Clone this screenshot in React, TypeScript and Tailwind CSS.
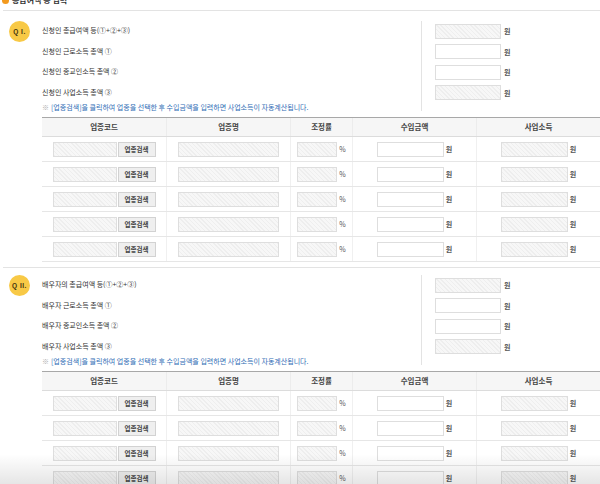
import React from 'react';

const hatch =
  'bg-[repeating-linear-gradient(45deg,#eeeeee_0px,#eeeeee_1px,#f7f7f7_1px,#f7f7f7_3px)]';

interface SectionProps {
  badge: string;
  labels: string[];
  topPad: string;
}

const Won = () => <span className="text-[7px] font-bold text-[#555]">원</span>;

const ReadOnlyBox = ({ width }: { width: string }) => (
  <input
    type="text"
    readOnly
    className={`${width} h-[15px] border border-[#dedede] ${hatch} outline-none`}
  />
);

const EditBox = ({ width }: { width: string }) => (
  <input
    type="text"
    className={`${width} h-[15px] border border-[#dedede] bg-white outline-none`}
  />
);

const headers = [
  { name: '업종코드', w: 'w-[124px]' },
  { name: '업종명', w: 'w-[124px]' },
  { name: '조정률', w: 'w-[62px]' },
  { name: '수입금액', w: 'w-[124px]' },
  { name: '사업소득', w: 'w-[124px]' },
];

const BizTable = () => (
  <div className="w-[558px] mt-[5px] border-t border-[#a8a8a8]">
    <div className="flex h-[19px] bg-[#f6f6f6] border-b border-[#dcdcdc]">
      {headers.map((h, i) => (
        <div
          key={h.name}
          className={`${h.w} flex items-center justify-center text-[7.5px] font-bold text-[#444] ${
            i > 0 ? 'border-l border-[#ececec]' : ''
          }`}
        >
          {h.name}
        </div>
      ))}
    </div>
    {[0, 1, 2, 3, 4].map((r) => (
      <div key={r} className="flex h-[25px] border-b border-[#e6e6e6]">
        <div className="w-[124px] flex items-center justify-center gap-[1px]">
          <ReadOnlyBox width="w-[64px]" />
          <button className="w-[38px] h-[15px] bg-[#efefef] border border-[#d2d2d2] text-[6.5px] font-bold text-[#444] leading-none">
            업종검색
          </button>
        </div>
        <div className="w-[124px] flex items-center justify-center border-l border-[#f0f0f0]">
          <ReadOnlyBox width="w-[101px]" />
        </div>
        <div className="w-[62px] flex items-center justify-center gap-[2px] border-l border-[#f0f0f0]">
          <ReadOnlyBox width="w-[40px]" />
          <span className="text-[7px] text-[#555]">%</span>
        </div>
        <div className="w-[124px] flex items-center justify-center gap-[2px] border-l border-[#f0f0f0]">
          <EditBox width="w-[67px]" />
          <Won />
        </div>
        <div className="w-[124px] flex items-center justify-center gap-[2px] border-l border-[#f0f0f0]">
          <ReadOnlyBox width="w-[67px]" />
          <Won />
        </div>
      </div>
    ))}
  </div>
);

const Section: React.FC<SectionProps> = ({ badge, labels, topPad }) => (
  <div className={`flex ${topPad}`}>
    <div className="ml-[9px] mt-[1px] w-[21px] h-[21px] rounded-full bg-[#f8c946] flex items-center justify-center font-['Liberation_Sans',sans-serif] text-[6.5px] font-bold text-[#3d3010] tracking-[0.5px] shrink-0 whitespace-pre">
      {badge}
    </div>
    <div className="ml-[12px] flex-1">
      <div className="flex">
        <div className="w-[379px]">
          {labels.map((l) => (
            <div key={l} className="h-[20.5px] flex items-center text-[7px] text-[#333]">
              {l}
            </div>
          ))}
          <div className="h-[10px] flex items-center text-[7px] text-[#2f6db5]">
            <span className="text-[#aaa] mr-[2px]">※</span>
            [업종검색]을 클릭하여 업종을 선택한 후 수입금액을 입력하면 사업소득이 자동계산됩니다.
          </div>
        </div>
        <div className="border-l border-[#e3e3e3] pl-[13px] my-[1px]">
          {[0, 1, 2, 3].map((i) => (
            <div key={i} className="h-[20.5px] flex items-center gap-[3px]">
              {i === 0 || i === 3 ? <ReadOnlyBox width="w-[66px]" /> : <EditBox width="w-[66px]" />}
              <Won />
            </div>
          ))}
        </div>
      </div>
      <BizTable />
    </div>
  </div>
);

export default function App() {
  return (
    <div className="relative w-[600px] h-[484px] overflow-hidden bg-white font-['Noto_Sans_CJK_KR',sans-serif]">
      <div className="-mt-[6px] h-[12px] flex items-center gap-[3px] pl-[2px]">
        <span className="w-[7px] h-[7px] rounded-full bg-[#f39a1e]" />
        <span className="text-[8px] font-bold text-[#333]">총급여액 등 입력</span>
      </div>
      <div className="ml-[3px] mt-[4px] h-px bg-[#e3e3e3]" />
      <Section
        badge="Q I."
        topPad="pt-[9px]"
        labels={[
          '신청인 총급여액 등(①+②+③)',
          '신청인 근로소득 총액 ①',
          '신청인 종교인소득 총액 ②',
          '신청인 사업소득 총액 ③',
        ]}
      />
      <div className="ml-[3px] mt-[5px] h-px bg-[#e3e3e3]" />
      <Section
        badge="Q II."
        topPad="pt-[6px]"
        labels={[
          '배우자의 총급여액 등(①+②+③)',
          '배우자 근로소득 총액 ①',
          '배우자 종교인소득 총액 ②',
          '배우자 사업소득 총액 ③',
        ]}
      />
      <div className="pointer-events-none absolute inset-x-0 bottom-0 h-[30px] bg-linear-to-b from-transparent to-black/10" />
    </div>
  );
}
